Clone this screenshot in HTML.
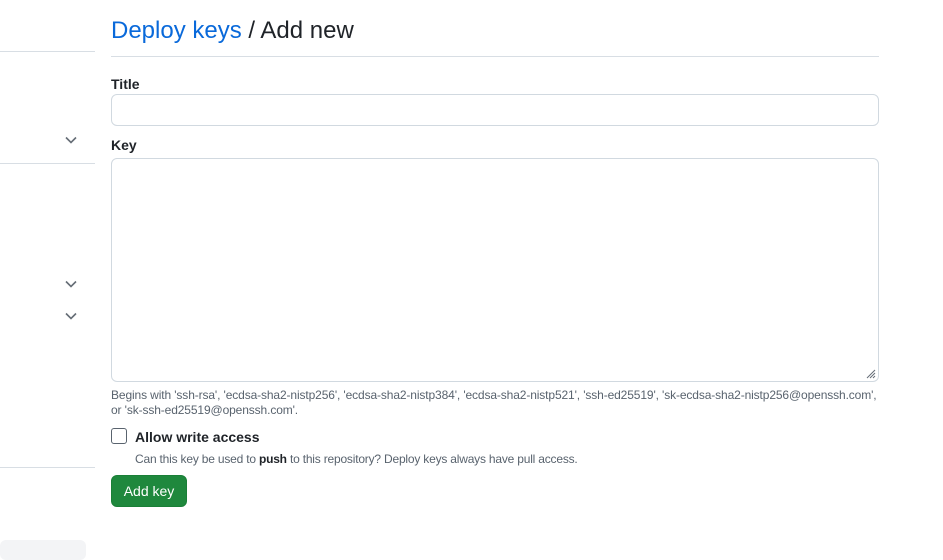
<!DOCTYPE html><html><head><style>
body{margin:0;width:943px;height:554px;background:#fff;font-family:"Liberation Sans",sans-serif;color:#1f2328;position:relative;overflow:hidden}
.a{position:absolute}
.ln{position:absolute;height:1px;background:#d8dee4}
.ch{position:absolute;width:12px;height:8px}
</style></head><body>
<div class="ln" style="left:0;top:51px;width:95px"></div>
<div class="ln" style="left:0;top:163px;width:95px"></div>
<div class="ln" style="left:0;top:467px;width:95px"></div>
<div class="a" style="left:0;top:540px;width:86px;height:20px;background:#f3f4f6;border-radius:6px"></div>
<svg class="ch" style="left:65px;top:136px" viewBox="0 0 12 8"><path d="M1 1.5l5 5 5-5" fill="none" stroke="#656d76" stroke-width="1.6"/></svg>
<svg class="ch" style="left:65px;top:280px" viewBox="0 0 12 8"><path d="M1 1.5l5 5 5-5" fill="none" stroke="#656d76" stroke-width="1.6"/></svg>
<svg class="ch" style="left:65px;top:312px" viewBox="0 0 12 8"><path d="M1 1.5l5 5 5-5" fill="none" stroke="#656d76" stroke-width="1.6"/></svg>
<div class="a" style="left:111px;top:17px;font-size:24px"><span style="color:#0969da">Deploy keys</span> / Add new</div>
<div class="ln" style="left:111px;top:56px;width:768px"></div>
<div class="a" style="left:111px;top:76px;font-size:14px;font-weight:bold">Title</div>
<div class="a" style="left:111px;top:94px;width:766px;height:30px;border:1px solid #d1d9e0;border-radius:6px"></div>
<div class="a" style="left:111px;top:137px;font-size:14px;font-weight:bold">Key</div>
<div class="a" style="left:111px;top:158px;width:766px;height:222px;border:1px solid #d1d9e0;border-radius:6px"></div>
<svg class="a" style="left:864px;top:367px" width="12" height="12"><path d="M11 3L3 11M11 6L6 11M11 9L9 11" stroke="#656d76" stroke-width="1"/></svg>
<div class="a" style="left:111px;top:388px;font-size:12px;color:#59636e;line-height:15px;width:800px;letter-spacing:-0.12px;white-space:nowrap">Begins with 'ssh-rsa', 'ecdsa-sha2-nistp256', 'ecdsa-sha2-nistp384', 'ecdsa-sha2-nistp521', 'ssh-ed25519', 'sk-ecdsa-sha2-nistp256@openssh.com',<br>or 'sk-ssh-ed25519@openssh.com'.</div>
<div class="a" style="left:111px;top:428px;width:14px;height:14px;border:1px solid #59636e;border-radius:3px"></div>
<div class="a" style="left:135px;top:429px;font-size:14px;font-weight:bold">Allow write access</div>
<div class="a" style="left:135px;top:452px;font-size:12px;color:#59636e;letter-spacing:-0.2px">Can this key be used to <b style="color:#1f2328;font-weight:bold">push</b> to this repository? Deploy keys always have pull access.</div>
<div class="a" style="left:111px;top:475px;width:74px;height:30px;background:#1f883d;border:1px solid #1a7f37;border-radius:6px;color:#fff;font-size:14px;line-height:30px;text-align:center">Add key</div>
</body></html>
